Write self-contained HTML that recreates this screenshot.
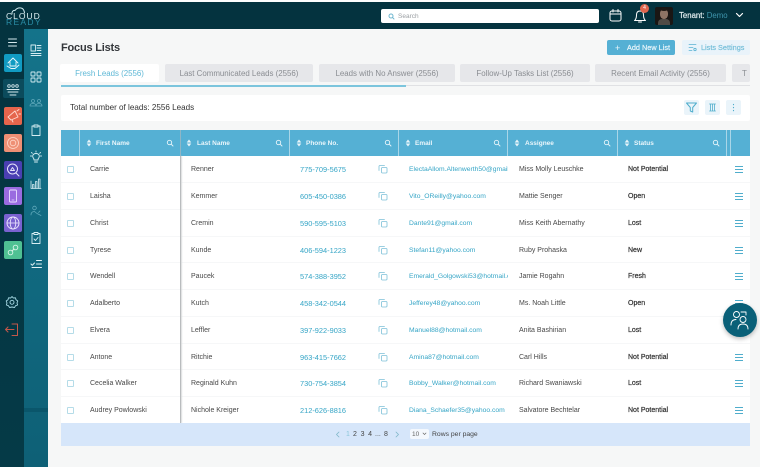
<!DOCTYPE html>
<html><head><meta charset="utf-8"><title>Focus Lists</title>
<style>
html,body{margin:0;padding:0;background:#f6f7f7}
body{width:760px;height:467px;overflow:hidden;position:relative;font-family:"Liberation Sans",sans-serif;color:#3a3a3a}
#w{left:0;top:0;width:760px;height:467px;overflow:hidden;background:#f6f7f7;filter:blur(.35px)}
div,span,svg{position:absolute}
.t{white-space:nowrap;font-size:7px;line-height:10px}
svg{fill:none;stroke-linecap:round;stroke-linejoin:round}
.sb{stroke:#cfe9ee;stroke-width:1}
.box{left:4px;width:17.5px;height:17.5px;border-radius:2px}
.tab{top:64px;height:18px;background:#e6e7ea;border-radius:2px;color:#8a8d92;font-size:7.9px;line-height:19px;text-align:center;white-space:nowrap;overflow:hidden}
.th{top:130px;height:26px;background:#55b0d4}
.thl{top:130px;width:1px;height:26px;background:#a9d6e8}
.htx{top:139px;color:#eaf6fb;font-weight:bold;font-size:6.5px;line-height:10px;white-space:nowrap}
.row{left:61px;width:689px;height:26px;background:#fff}
.cb{left:6px;top:10px;width:5px;height:5px;border:1px solid #b5dce8;border-radius:1px;background:#fff}
.c{top:9px;font-size:7px;line-height:10px;white-space:nowrap;color:#484848}
.l{color:#35a5c6;font-size:7.4px}
.e{color:#35a5c6;font-size:6.75px}
.s{color:#333;-webkit-text-stroke:.2px #333}
.copy{left:317px;top:8px}
.mn{left:674px;top:10px;width:8px;height:5px;border-top:1px solid #4fadcc;border-bottom:1px solid #4fadcc}
.mn:after{content:"";position:absolute;left:0;top:2px;width:8px;height:1px;background:#4fadcc}
</style></head><body><div id="w">

<div style="left:0;top:0;width:760px;height:2px;background:#fdfdfd"></div>
<div style="left:0;top:2px;width:760px;height:27px;background:#04333f"></div>
<div style="left:0;top:29px;width:24px;height:438px;background:linear-gradient(#04333f,#053a47)"></div>
<div style="left:24px;top:29px;width:24px;height:438px;background:linear-gradient(#14738a,#0e6076)"></div>
<div style="left:24px;top:408px;width:24px;height:4px;background:#0a566b"></div>

<!-- logo -->
<svg style="left:5px;top:6px" width="40" height="12" viewBox="0 0 40 12"><path class="sb" d="M7 8V6.500Q8 4 10 4.500Q12 1.500 16 2Q19 2.500 19.500 7" stroke-width=".8"/></svg>
<div class="t" style="left:6px;top:13px;font-size:8.500px;line-height:6px;color:#dbeef2;letter-spacing:1px">CLOUD</div>
<div class="t" style="left:6px;top:19px;font-size:8.500px;line-height:6px;color:#2a8da6;letter-spacing:1.300px">READY</div>

<!-- search -->
<div style="left:381px;top:9px;width:218px;height:14px;background:#fff;border-radius:2px"></div>
<svg style="left:388px;top:13px" width="7" height="7" viewBox="0 0 7 7"><circle cx="3" cy="3" r="2" stroke="#6fb6cf"/><path d="M4.500 4.500L6 6" stroke="#6fb6cf"/></svg>
<div class="t" style="left:398px;top:12px;color:#9a9ea2;font-size:6.500px">Search</div>

<!-- calendar -->
<svg style="left:608px;top:8px" width="15" height="15" viewBox="0 0 15 15"><rect x="2" y="3" width="11" height="10" rx="2" stroke="#fff"/><path d="M2 6H13M5 1.500V4M10 1.500V4" stroke="#fff"/></svg>
<!-- bell -->
<svg style="left:632px;top:8px" width="16" height="16" viewBox="0 0 16 16"><path d="M2.500 12.500H13.500Q11.500 11 11.500 7Q11.500 3 8 3Q4.500 3 4.500 7Q4.500 11 2.500 12.500ZM6.500 14H9.500" stroke="#fff"/></svg>
<div style="left:640px;top:4px;width:9px;height:9px;border-radius:50%;background:#e0654d;color:#fff;font-size:5px;line-height:9px;text-align:center">4</div>
<!-- avatar -->
<div style="left:655px;top:7px;width:18px;height:18px;border-radius:2px;background:#1a1614;overflow:hidden">
 <div style="left:5px;top:2px;width:8px;height:10px;border-radius:45%;background:#8d7364"></div>
 <div style="left:5px;top:1px;width:8px;height:3px;border-radius:50%;background:#1f1814"></div>
 <div style="left:3px;top:12px;width:12px;height:8px;border-radius:4px 4px 0 0;background:#4f4b46"></div>
</div>
<div class="t" style="left:679px;top:11px;color:#e8f2f4;font-size:7.800px;-webkit-text-stroke:.15px #e8f2f4">Tenant: <span style="position:static;color:#3f96ad;-webkit-text-stroke:0">Demo</span></div>
<svg style="left:735px;top:12px" width="9" height="7" viewBox="0 0 9 7"><path d="M1.500 1.500L4.500 4.500L7.500 1.500" stroke="#fff" stroke-width="1.200"/></svg>

<!-- primary sidebar -->
<svg style="left:7px;top:38px" width="11" height="9" viewBox="0 0 11 9"><path d="M1.500 1H9.500M1.500 4.500H9.500M1.500 8H9.500" stroke="#d5e8ec"/></svg>
<div class="box" style="top:54px;background:#119bc2"></div>
<svg style="left:4px;top:54px" width="18" height="18" viewBox="0 0 18 18"><path d="M4 9L9 4L14 9M6 8V12H12V8M3 12L7 14.500H11L15 11" stroke="#e8f6fa" stroke-width=".9"/></svg>
<div style="left:3px;top:79px;width:21px;height:19px;background:#0b4b5c;border-radius:2px 0 0 2px"></div>
<svg style="left:4px;top:80px" width="18" height="18" viewBox="0 0 18 18"><circle cx="5" cy="6" r="1.300" stroke="#d5e8ec" stroke-width=".8"/><circle cx="9" cy="6" r="1.300" stroke="#d5e8ec" stroke-width=".8"/><circle cx="13" cy="6" r="1.300" stroke="#d5e8ec" stroke-width=".8"/><path d="M3 9.500H15M4 12H14M6 15H12" stroke="#d5e8ec" stroke-width=".9"/></svg>
<div class="box" style="top:107px;background:#e5654c"></div>
<svg style="left:4px;top:107px" width="18" height="18" viewBox="0 0 18 18"><path d="M4 10L11 4L14 10L7 13ZM8 13L9 15M13 4L15 2.500M15 7H16.500" stroke="#ffd9cf" stroke-width=".9"/></svg>
<div class="box" style="top:134px;background:#ee8f74"></div>
<svg style="left:4px;top:134px" width="18" height="18" viewBox="0 0 18 18"><circle cx="9" cy="9" r="5.500" stroke="#ffd9cb" stroke-width=".8"/><circle cx="9" cy="9" r="2.800" stroke="#ffd9cb" stroke-width=".8"/></svg>
<div class="box" style="top:161px;background:#4a3fb2"></div>
<svg style="left:4px;top:161px" width="18" height="18" viewBox="0 0 18 18"><circle cx="8.500" cy="8" r="5" stroke="#e5e2fa"/><path d="M12 12L15 15M6.500 9.500L8.500 6.500L10.500 9.500Z" stroke="#e5e2fa"/></svg>
<div class="box" style="top:187px;background:#9a6be0"></div>
<svg style="left:4px;top:187px" width="18" height="18" viewBox="0 0 18 18"><rect x="5.500" y="3" width="7" height="12" rx="1" stroke="#eadfff" stroke-width=".9"/><path d="M8 13H10" stroke="#eadfff" stroke-width=".8"/></svg>
<div class="box" style="top:214px;background:#7a62d0"></div>
<svg style="left:4px;top:214px" width="18" height="18" viewBox="0 0 18 18"><circle cx="9" cy="9" r="6" stroke="#efeaff" stroke-width=".9"/><ellipse cx="9" cy="9" rx="2.800" ry="6" stroke="#efeaff" stroke-width=".8"/><path d="M3 9H15" stroke="#efeaff" stroke-width=".8"/></svg>
<div class="box" style="top:241px;background:#4fc193"></div>
<svg style="left:4px;top:241px" width="18" height="18" viewBox="0 0 18 18"><path d="M8 10L10 8" stroke="#d9f5e9"/><circle cx="6.500" cy="11.500" r="2.300" stroke="#d9f5e9" stroke-width=".9"/><circle cx="11.500" cy="6.500" r="2.300" stroke="#d9f5e9" stroke-width=".9"/></svg>
<svg style="left:5px;top:295px" width="14" height="14" viewBox="0 0 14 14"><path d="M7 1.500L8.300 3L10.500 2.800L11 4.800L12.800 6L12 8L12.600 10L10.600 10.700L9.500 12.500L7 12L4.600 12.500L3.400 10.700L1.400 10L2 8L1.200 6L3 4.800L3.500 2.800L5.700 3Z" stroke="#a8dbe6" stroke-width=".9"/><circle cx="7" cy="7.300" r="2" stroke="#a8dbe6" stroke-width=".9"/></svg>
<svg style="left:4px;top:322px" width="15" height="15" viewBox="0 0 15 15"><path d="M8 2H13.500V13.500H8M1.500 7.500H10M4 5L1.500 7.500L4 10" stroke="#c4574a" stroke-width="1"/></svg>

<!-- secondary sidebar -->
<svg style="left:29px;top:43px" width="14" height="14" viewBox="0 0 14 14"><rect x="2" y="2" width="4.500" height="6" stroke="#d6edf2" stroke-width=".9"/><path d="M8 2.500H12M8 5H12M8 7.500H12M2 10.500H12M2 12.500H12" stroke="#d6edf2" stroke-width=".9"/></svg>
<svg style="left:29px;top:70px" width="14" height="14" viewBox="0 0 14 14"><rect x="2" y="2" width="4" height="4" rx=".6" stroke="#d6edf2" stroke-width=".9"/><rect x="8" y="2" width="4" height="4" rx=".6" stroke="#d6edf2" stroke-width=".9"/><rect x="2" y="8" width="4" height="4" rx=".6" stroke="#d6edf2" stroke-width=".9"/><rect x="8" y="8" width="4" height="4" rx=".6" stroke="#d6edf2" stroke-width=".9"/></svg>
<svg style="left:29px;top:97px" width="14" height="12" viewBox="0 0 14 12"><circle cx="4" cy="4" r="1.500" stroke="#5fa8ba" stroke-width=".8"/><circle cx="10" cy="4" r="1.500" stroke="#5fa8ba" stroke-width=".8"/><path d="M1 9Q1 6.500 4 6.500T7 9H13Q13 6.500 10 6.500T7 9Z" stroke="#5fa8ba" stroke-width=".8"/></svg>
<svg style="left:29px;top:123px" width="14" height="14" viewBox="0 0 14 14"><path d="M4.500 3H3V12.500H11V3H9.500M5 2H9V4H5Z" stroke="#d6edf2" stroke-width=".9"/></svg>
<svg style="left:29px;top:150px" width="14" height="14" viewBox="0 0 14 14"><path d="M5 10Q5 8.500 4 7.500Q3.500 6.500 3.800 5.500Q4.500 3.500 7 3.500T10.200 5.500Q10.500 6.500 10 7.500Q9 8.500 9 10ZM5.500 12H8.500M7 1V2M1.500 6H2.500M11.500 6H12.500M2.500 2.500L3.300 3.300M11.500 2.500L10.700 3.300" stroke="#d6edf2" stroke-width=".9"/></svg>
<svg style="left:29px;top:176px" width="14" height="14" viewBox="0 0 14 14"><path d="M2 12.500H12M2 12.500V5M3.500 12V8.500H5V12M6.500 12V5.500H8V12M9.500 12V3H11V12" stroke="#d6edf2" stroke-width=".8"/></svg>
<svg style="left:29px;top:204px" width="14" height="14" viewBox="0 0 14 14"><circle cx="5.500" cy="4" r="1.800" stroke="#5fa8ba" stroke-width=".8"/><path d="M2 11Q2 7.500 5.500 7.500L8 9.500L12 11.500M9.500 8.500L11 7" stroke="#5fa8ba" stroke-width=".8"/></svg>
<svg style="left:29px;top:231px" width="14" height="14" viewBox="0 0 14 14"><path d="M4.500 2.500H3V12.500H11V2.500H9.500M5 1.500H9V3.500H5ZM5 8L6.500 9.500L9 6.500" stroke="#d6edf2" stroke-width=".9"/></svg>
<svg style="left:29px;top:258px" width="14" height="12" viewBox="0 0 14 12"><path d="M2 6L3.300 7.300L5.500 5M7.500 2.500H12.500M7.500 6H12.500M3 9.500H12.500" stroke="#e3f3f6" stroke-width="1"/></svg>

<!-- header -->
<div class="t" style="left:61px;top:40px;font-size:11px;line-height:16px;font-weight:bold;color:#33363a;letter-spacing:-.2px">Focus Lists</div>
<div style="left:607px;top:40px;width:68px;height:15px;background:#55b0d4;border-radius:2px"></div>
<div class="t" style="left:615px;top:43px;font-size:9px;color:#eaf6fb">+</div>
<div class="t" style="left:627px;top:43px;color:#eaf6fb;font-size:7.300px;-webkit-text-stroke:.2px #eaf6fb">Add New List</div>
<div style="left:682px;top:40px;width:68px;height:15px;background:#e9f3fa;border-radius:2px"></div>
<svg style="left:688px;top:43px" width="9" height="9" viewBox="0 0 9 9"><path d="M1 1.500H8M1 4.500H5M1 7.500H4" stroke="#59b2d2" stroke-width=".8"/><circle cx="7" cy="6.500" r="1.200" stroke="#59b2d2" stroke-width=".8"/></svg>
<div class="t" style="left:701px;top:43px;color:#71bdd8;font-size:7.300px;-webkit-text-stroke:.15px #71bdd8">Lists Settings</div>

<!-- tabs -->
<div class="tab" style="left:60px;width:99px;background:#fff;color:#5fb8d6">Fresh Leads (2556)</div>
<div class="tab" style="left:165px;width:148px">Last Communicated Leads (2556)</div>
<div class="tab" style="left:319px;width:136px">Leads with No Answer (2556)</div>
<div class="tab" style="left:460px;width:130px">Follow-Up Tasks List (2556)</div>
<div class="tab" style="left:595px;width:131px">Recent Email Activity (2556)</div>
<div class="tab" style="left:732px;width:18px;text-align:left;text-indent:10px">T</div>
<div style="left:61px;top:85px;width:689px;height:1px;background:#e0e1e4"></div>
<div style="left:61px;top:85px;width:345px;height:2px;background:#7cc5dd"></div>

<!-- toolbar -->
<div style="left:61px;top:95px;width:689px;height:26px;background:#fff;border-radius:2px"></div>
<div class="t" style="left:70px;top:103px;font-size:8.100px;color:#333">Total number of leads: 2556 Leads</div>
<div style="left:684px;top:100px;width:15px;height:15px;background:#eaf4fa;border-radius:2px"></div>
<svg style="left:684px;top:100px" width="15" height="15" viewBox="0 0 15 15"><path d="M2.500 3H12.500L8.700 7.500V12L6.300 11V7.500Z" stroke="#4fadcc"/></svg>
<div style="left:705px;top:100px;width:15px;height:15px;background:#eaf4fa;border-radius:2px"></div>
<svg style="left:705px;top:100px" width="15" height="15" viewBox="0 0 15 15"><path d="M4.500 4H10.500M4.500 11H10.500M5.500 4V11M7.500 4V11M9.500 4V11" stroke="#4fadcc" stroke-width=".8"/></svg>
<div style="left:726px;top:100px;width:15px;height:15px;background:#eaf4fa;border-radius:2px"></div>
<svg style="left:726px;top:100px" width="15" height="15" viewBox="0 0 15 15"><path d="M7.500 4.500V4.600M7.500 7.500V7.600M7.500 10.500V10.600" stroke="#4fadcc" stroke-width="1.200"/></svg>

<!-- table head -->
<div class="th" style="left:61px;width:689px"></div>
<div class="thl" style="left:79px"></div>
<div class="thl" style="left:180px;background:#8fb6c6"></div>
<div class="thl" style="left:289px"></div>
<div class="thl" style="left:398px"></div>
<div class="thl" style="left:507px"></div>
<div class="thl" style="left:617px"></div>
<div class="thl" style="left:726px"></div>
<div class="thl" style="left:730px"></div>

<svg style="left:86px;top:139px" width="6" height="8" viewBox="0 0 6 8"><path d="M3 .5L5.300 3.500H.7ZM3 7.500L5.300 4.500H.7Z" fill="#e8f5fa"/></svg><div class="htx" style="left:96px">First Name</div>
<svg style="left:186px;top:139px" width="6" height="8" viewBox="0 0 6 8"><path d="M3 .5L5.300 3.500H.7ZM3 7.500L5.300 4.500H.7Z" fill="#e8f5fa"/></svg><div class="htx" style="left:197px">Last Name</div>
<svg style="left:296px;top:139px" width="6" height="8" viewBox="0 0 6 8"><path d="M3 .5L5.300 3.500H.7ZM3 7.500L5.300 4.500H.7Z" fill="#e8f5fa"/></svg><div class="htx" style="left:306px">Phone No.</div>
<svg style="left:405px;top:139px" width="6" height="8" viewBox="0 0 6 8"><path d="M3 .5L5.300 3.500H.7ZM3 7.500L5.300 4.500H.7Z" fill="#e8f5fa"/></svg><div class="htx" style="left:415px">Email</div>
<svg style="left:514px;top:139px" width="6" height="8" viewBox="0 0 6 8"><path d="M3 .5L5.300 3.500H.7ZM3 7.500L5.300 4.500H.7Z" fill="#e8f5fa"/></svg><div class="htx" style="left:525px">Assignee</div>
<svg style="left:624px;top:139px" width="6" height="8" viewBox="0 0 6 8"><path d="M3 .5L5.300 3.500H.7ZM3 7.500L5.300 4.500H.7Z" fill="#e8f5fa"/></svg><div class="htx" style="left:634px">Status</div>

<svg style="left:166px;top:139px" width="8" height="8" viewBox="0 0 8 8"><circle cx="3.500" cy="3.500" r="2.200" stroke="#e8f5fa" stroke-width=".9"/><path d="M5.200 5.200L7 7" stroke="#e8f5fa" stroke-width=".9"/></svg>
<svg style="left:275px;top:139px" width="8" height="8" viewBox="0 0 8 8"><circle cx="3.500" cy="3.500" r="2.200" stroke="#e8f5fa" stroke-width=".9"/><path d="M5.200 5.200L7 7" stroke="#e8f5fa" stroke-width=".9"/></svg>
<svg style="left:384px;top:139px" width="8" height="8" viewBox="0 0 8 8"><circle cx="3.500" cy="3.500" r="2.200" stroke="#e8f5fa" stroke-width=".9"/><path d="M5.200 5.200L7 7" stroke="#e8f5fa" stroke-width=".9"/></svg>
<svg style="left:493px;top:139px" width="8" height="8" viewBox="0 0 8 8"><circle cx="3.500" cy="3.500" r="2.200" stroke="#e8f5fa" stroke-width=".9"/><path d="M5.200 5.200L7 7" stroke="#e8f5fa" stroke-width=".9"/></svg>
<svg style="left:603px;top:139px" width="8" height="8" viewBox="0 0 8 8"><circle cx="3.500" cy="3.500" r="2.200" stroke="#e8f5fa" stroke-width=".9"/><path d="M5.200 5.200L7 7" stroke="#e8f5fa" stroke-width=".9"/></svg>
<svg style="left:712px;top:139px" width="8" height="8" viewBox="0 0 8 8"><circle cx="3.500" cy="3.500" r="2.200" stroke="#e8f5fa" stroke-width=".9"/><path d="M5.200 5.200L7 7" stroke="#e8f5fa" stroke-width=".9"/></svg>

<!-- rows -->
<div class="row" style="top:156px"><div class="cb"></div><div class="c" style="left:29px">Carrie</div><div class="c" style="left:130px">Renner</div><div class="c l" style="left:239px">775-709-5675</div><svg class="copy" width="10" height="10" viewBox="0 0 10 10"><rect x="3.500" y="3.500" width="5.500" height="5.500" rx="1" stroke="#7cc0d8" stroke-width=".8"/><path d="M6.500 1.500H2Q1 1.500 1 2.500V6.500" stroke="#7cc0d8" stroke-width=".8"/></svg><div class="c e" style="left:348px;width:99px;overflow:hidden">ElectaAllom.Altenwerth50@gmail.com</div><div class="c" style="left:458px">Miss Molly Leuschke</div><div class="c s" style="left:567px">Not Potential</div><div class="mn"></div></div>
<div class="row" style="top:183px"><div class="cb"></div><div class="c" style="left:29px">Laisha</div><div class="c" style="left:130px">Kemmer</div><div class="c l" style="left:239px">605-450-0386</div><svg class="copy" width="10" height="10" viewBox="0 0 10 10"><rect x="3.500" y="3.500" width="5.500" height="5.500" rx="1" stroke="#7cc0d8" stroke-width=".8"/><path d="M6.500 1.500H2Q1 1.500 1 2.500V6.500" stroke="#7cc0d8" stroke-width=".8"/></svg><div class="c e" style="left:348px">Vito_OReilly@yahoo.com</div><div class="c" style="left:458px">Mattie Senger</div><div class="c s" style="left:567px">Open</div><div class="mn"></div></div>
<div class="row" style="top:210px"><div class="cb"></div><div class="c" style="left:29px">Christ</div><div class="c" style="left:130px">Cremin</div><div class="c l" style="left:239px">590-595-5103</div><svg class="copy" width="10" height="10" viewBox="0 0 10 10"><rect x="3.500" y="3.500" width="5.500" height="5.500" rx="1" stroke="#7cc0d8" stroke-width=".8"/><path d="M6.500 1.500H2Q1 1.500 1 2.500V6.500" stroke="#7cc0d8" stroke-width=".8"/></svg><div class="c e" style="left:348px">Dante91@gmail.com</div><div class="c" style="left:458px">Miss Keith Abernathy</div><div class="c s" style="left:567px">Lost</div><div class="mn"></div></div>
<div class="row" style="top:237px"><div class="cb"></div><div class="c" style="left:29px">Tyrese</div><div class="c" style="left:130px">Kunde</div><div class="c l" style="left:239px">406-594-1223</div><svg class="copy" width="10" height="10" viewBox="0 0 10 10"><rect x="3.500" y="3.500" width="5.500" height="5.500" rx="1" stroke="#7cc0d8" stroke-width=".8"/><path d="M6.500 1.500H2Q1 1.500 1 2.500V6.500" stroke="#7cc0d8" stroke-width=".8"/></svg><div class="c e" style="left:348px">Stefan11@yahoo.com</div><div class="c" style="left:458px">Ruby Prohaska</div><div class="c s" style="left:567px">New</div><div class="mn"></div></div>
<div class="row" style="top:263px"><div class="cb"></div><div class="c" style="left:29px">Wendell</div><div class="c" style="left:130px">Paucek</div><div class="c l" style="left:239px">574-388-3952</div><svg class="copy" width="10" height="10" viewBox="0 0 10 10"><rect x="3.500" y="3.500" width="5.500" height="5.500" rx="1" stroke="#7cc0d8" stroke-width=".8"/><path d="M6.500 1.500H2Q1 1.500 1 2.500V6.500" stroke="#7cc0d8" stroke-width=".8"/></svg><div class="c e" style="left:348px;width:99px;overflow:hidden">Emerald_Golgowski53@hotmail.com</div><div class="c" style="left:458px">Jamie Rogahn</div><div class="c s" style="left:567px">Fresh</div><div class="mn"></div></div>
<div class="row" style="top:290px"><div class="cb"></div><div class="c" style="left:29px">Adalberto</div><div class="c" style="left:130px">Kutch</div><div class="c l" style="left:239px">458-342-0544</div><svg class="copy" width="10" height="10" viewBox="0 0 10 10"><rect x="3.500" y="3.500" width="5.500" height="5.500" rx="1" stroke="#7cc0d8" stroke-width=".8"/><path d="M6.500 1.500H2Q1 1.500 1 2.500V6.500" stroke="#7cc0d8" stroke-width=".8"/></svg><div class="c e" style="left:348px">Jefferey48@yahoo.com</div><div class="c" style="left:458px">Ms. Noah Little</div><div class="c s" style="left:567px">Open</div><div class="mn"></div></div>
<div class="row" style="top:317px"><div class="cb"></div><div class="c" style="left:29px">Elvera</div><div class="c" style="left:130px">Leffler</div><div class="c l" style="left:239px">397-922-9033</div><svg class="copy" width="10" height="10" viewBox="0 0 10 10"><rect x="3.500" y="3.500" width="5.500" height="5.500" rx="1" stroke="#7cc0d8" stroke-width=".8"/><path d="M6.500 1.500H2Q1 1.500 1 2.500V6.500" stroke="#7cc0d8" stroke-width=".8"/></svg><div class="c e" style="left:348px">Manuel88@hotmail.com</div><div class="c" style="left:458px">Anita Bashirian</div><div class="c s" style="left:567px">Lost</div><div class="mn"></div></div>
<div class="row" style="top:344px"><div class="cb"></div><div class="c" style="left:29px">Antone</div><div class="c" style="left:130px">Ritchie</div><div class="c l" style="left:239px">963-415-7662</div><svg class="copy" width="10" height="10" viewBox="0 0 10 10"><rect x="3.500" y="3.500" width="5.500" height="5.500" rx="1" stroke="#7cc0d8" stroke-width=".8"/><path d="M6.500 1.500H2Q1 1.500 1 2.500V6.500" stroke="#7cc0d8" stroke-width=".8"/></svg><div class="c e" style="left:348px">Amina87@hotmail.com</div><div class="c" style="left:458px">Carl Hills</div><div class="c s" style="left:567px">Not Potential</div><div class="mn"></div></div>
<div class="row" style="top:370px"><div class="cb"></div><div class="c" style="left:29px">Cecelia Walker</div><div class="c" style="left:130px">Reginald Kuhn</div><div class="c l" style="left:239px">730-754-3854</div><svg class="copy" width="10" height="10" viewBox="0 0 10 10"><rect x="3.500" y="3.500" width="5.500" height="5.500" rx="1" stroke="#7cc0d8" stroke-width=".8"/><path d="M6.500 1.500H2Q1 1.500 1 2.500V6.500" stroke="#7cc0d8" stroke-width=".8"/></svg><div class="c e" style="left:348px">Bobby_Walker@hotmail.com</div><div class="c" style="left:458px">Richard Swaniawski</div><div class="c s" style="left:567px">Lost</div><div class="mn"></div></div>
<div class="row" style="top:397px"><div class="cb"></div><div class="c" style="left:29px">Audrey Powlowski</div><div class="c" style="left:130px">Nichole Kreiger</div><div class="c l" style="left:239px">212-626-8816</div><svg class="copy" width="10" height="10" viewBox="0 0 10 10"><rect x="3.500" y="3.500" width="5.500" height="5.500" rx="1" stroke="#7cc0d8" stroke-width=".8"/><path d="M6.500 1.500H2Q1 1.500 1 2.500V6.500" stroke="#7cc0d8" stroke-width=".8"/></svg><div class="c e" style="left:348px">Diana_Schaefer35@yahoo.com</div><div class="c" style="left:458px">Salvatore Bechtelar</div><div class="c s" style="left:567px">Not Potential</div><div class="mn"></div></div>

<!-- row separators -->
<div style="left:61px;top:182px;width:689px;height:1px;background:#f6f7f8"></div>
<div style="left:61px;top:209px;width:689px;height:1px;background:#f6f7f8"></div>
<div style="left:61px;top:236px;width:689px;height:1px;background:#f6f7f8"></div>
<div style="left:61px;top:262px;width:689px;height:1px;background:#f6f7f8"></div>
<div style="left:61px;top:289px;width:689px;height:1px;background:#f6f7f8"></div>
<div style="left:61px;top:316px;width:689px;height:1px;background:#f6f7f8"></div>
<div style="left:61px;top:343px;width:689px;height:1px;background:#f6f7f8"></div>
<div style="left:61px;top:369px;width:689px;height:1px;background:#f6f7f8"></div>
<div style="left:61px;top:396px;width:689px;height:1px;background:#f6f7f8"></div>

<!-- frozen column shadow -->
<div style="left:180px;top:156px;width:1px;height:267px;background:#b9bcbe;box-shadow:1px 0 1px #d5d7d8"></div>

<!-- footer -->
<div style="left:61px;top:423px;width:689px;height:23px;background:#d6e6fa"></div>
<svg style="left:335px;top:431px" width="6" height="7" viewBox="0 0 6 7"><path d="M4 1L1.500 3.500L4 6" stroke="#7fb6c9" stroke-width=".8"/></svg>
<div class="t" style="left:346px;top:430px;color:#8cc6da">1</div>
<div class="t" style="left:353px;top:430px;color:#444;letter-spacing:3.700px">234</div>
<div class="t" style="left:375px;top:430px;color:#555">...</div>
<div class="t" style="left:384px;top:430px;color:#444">8</div>
<svg style="left:394px;top:431px" width="6" height="7" viewBox="0 0 6 7"><path d="M2 1L4.500 3.500L2 6" stroke="#7fb6c9" stroke-width=".8"/></svg>
<div style="left:410px;top:429px;width:19px;height:10px;background:#f4f8fd;border-radius:2px"></div>
<div class="t" style="left:412px;top:430px;color:#666;font-size:6.500px">10</div>
<svg style="left:422px;top:432px" width="5" height="4" viewBox="0 0 5 4"><path d="M1 1L2.500 2.500L4 1" stroke="#666" stroke-width=".7"/></svg>
<div class="t" style="left:432px;top:430px;color:#444;font-size:6.800px">Rows per page</div>

<!-- FAB -->
<div style="left:723px;top:303px;width:34px;height:34px;border-radius:50%;background:#0a6078;box-shadow:0 2px 4px rgba(0,0,0,.25)"></div>
<svg style="left:723px;top:303px" width="34" height="34" viewBox="0 0 34 34"><circle cx="13.500" cy="11.500" r="3" stroke="#fff" stroke-width=".9"/><path d="M8 22Q8 16.500 13 16.500" stroke="#fff" stroke-width=".9"/><circle cx="20" cy="16.500" r="3" stroke="#fff" stroke-width=".9"/><path d="M15 26Q15 21 20 21T25 26M18 9H23V12" stroke="#fff" stroke-width=".9"/></svg>
</div></body></html>
